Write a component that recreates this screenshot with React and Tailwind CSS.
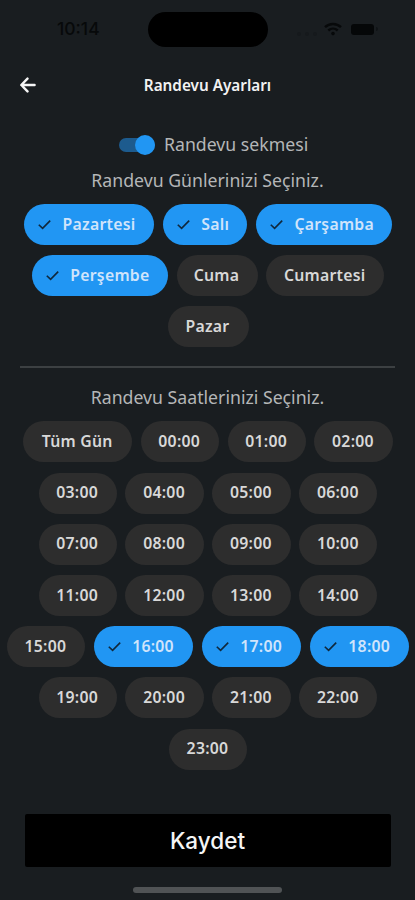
import { useState } from 'react'

const DAYS = [
  { label: 'Pazartesi', width: 'w-[130px]', selected: true },
  { label: 'Salı', width: 'w-[84.5px]', selected: true },
  { label: 'Çarşamba', width: 'w-[136px]', selected: true },
  { label: 'Perşembe', width: 'w-[136px]', selected: true },
  { label: 'Cuma', width: 'w-[81px]' },
  { label: 'Cumartesi', width: 'w-[118px]' },
  { label: 'Pazar', width: 'w-[81px]' },
]

const SELECTED_HOURS = [16, 17, 18]

const HOURS = [
  { label: 'Tüm Gün', width: 'w-[108.5px]' },
  ...Array.from({ length: 24 }, (_, i) => {
    const selected = SELECTED_HOURS.includes(i)
    return {
      label: `${String(i).padStart(2, '0')}:00`,
      width: selected ? 'w-[99.4px]' : 'w-[78.2px]',
      selected,
    }
  }),
]

const StatusBar = () => (
  <div className="flex h-[58px] items-center text-[#07090a]">
    <div className="w-[148px] pl-[57px] font-['Inter',sans-serif] text-[17.5px] font-medium leading-none">10:14</div>
    <div className="h-[35px] w-[120px] rounded-full bg-black" />
    <div className="ml-[29px] flex w-[20px] justify-between pt-[9px]">
      <span className="h-1 w-1 rounded-full bg-[#16191c]" />
      <span className="h-1 w-1 rounded-full bg-[#16191c]" />
      <span className="h-1 w-1 rounded-full bg-[#16191c]" />
    </div>
    <svg className="ml-[7px] h-[14px] w-[18px]" viewBox="0 0 18 14" fill="none" stroke="currentColor" strokeWidth="2.4">
      <path d="M1 5.2C5.5.9 12.5.9 17 5.2" />
      <path d="M4.3 8.5c2.7-2.5 6.7-2.5 9.4 0" />
      <circle cx="9" cy="11.6" r="1.8" fill="currentColor" stroke="none" />
    </svg>
    <div className="ml-[9px] h-[11px] w-[23px] rounded-[3px] bg-[#050708]" />
    <div className="ml-[2px] h-1 w-[2px] rounded-r bg-[#101416]" />
  </div>
)

const Chip = ({ label, width, selected, onClick }) => (
  <button
    type="button"
    onClick={onClick}
    className={`flex h-[41px] shrink-0 items-center rounded-full whitespace-nowrap text-[15.8px] font-semibold tracking-[0.25px] ${width} ${
      selected ? 'bg-[#2196f3] pl-[14px] text-[#d0e4fb]' : 'justify-center bg-[#2d2d2d] pr-px text-[#d8d8d8]'
    }`}
  >
    {selected &&
      <svg className="mr-[11.5px] h-[13px] w-[13px] shrink-0" viewBox="0 0 13 13" fill="none" stroke="#10283c" strokeWidth="1.6">
        <path d="M.8 6.7l3.8 3.7 7.6-7.8" />
      </svg>
    }
    <span>{label}</span>
  </button>
)

const ChipGroup = ({ items }) => {
  const [chips, setChips] = useState(items)

  const toggle = (index) => {
    setChips(chips.map((chip, i) => i === index ? { ...chip, selected: !chip.selected, width: 'px-[17px]' } : chip))
  }

  return (
    <div className="flex flex-wrap justify-center gap-x-[8.7px] gap-y-[10.2px] pl-px">
      {chips.map((chip, i) => <Chip key={chip.label} {...chip} onClick={() => toggle(i)} />)}
    </div>
  )
}

const App = () => {
  return (
    <div className="flex h-[900px] w-[415px] flex-col overflow-hidden bg-[#191d20] font-['Noto_Sans','Open_Sans',sans-serif]">
      <StatusBar />

      <header className="flex h-[54px] items-center pl-[20px]">
        <svg className="h-[16px] w-[16px]" viewBox="0 0 16 16" fill="none" stroke="#f5f5f5" strokeWidth="2.4" strokeLinecap="round" strokeLinejoin="round">
          <path d="M14.6 8H1.5M7.5 1.6L1.3 8l6.2 6.4" />
        </svg>
        <h1 className="mr-[36px] flex-1 pt-px text-center text-[15.3px] font-semibold leading-none text-[#f2f2f2]">Randevu Ayarları</h1>
      </header>

      <main className="flex-1">
        <div className="mt-[20px] flex h-[25px] items-center pl-[119px]">
          <div className="flex h-[14px] w-[36px] items-center justify-end rounded-full bg-[#1d5b8e]">
            <span className="h-[20px] w-[20px] shrink-0 rounded-full bg-[#2196f3]" />
          </div>
          <span className="ml-[9px] text-[17.7px] leading-none text-[#b4b6b7]">Randevu sekmesi</span>
        </div>

        <h2 className="mt-[11px] h-[36px] text-center text-[17.7px] leading-[24px] text-[#b4b6b7]">Randevu Günlerinizi Seçiniz.</h2>
        <ChipGroup items={DAYS} />

        <hr className="mx-[20px] mt-[19px] border-t-2 border-[#3c4042]" />

        <h2 className="mt-[17px] h-[36px] text-center text-[17.7px] leading-[24px] text-[#b4b6b7]">Randevu Saatlerinizi Seçiniz.</h2>
        <ChipGroup items={HOURS} />
      </main>

      <footer className="flex flex-col items-center pb-[7px]">
        <button type="button" className="h-[53px] w-[366px] rounded-[2px] bg-black pt-[2px] font-['Inter',sans-serif] text-[22.5px] font-medium leading-none text-[#f5f5f5]">
          Kaydet
        </button>
        <div className="mt-[20px] h-[6px] w-[149px] rounded-full bg-[#505355]" />
      </footer>
    </div>
  )
}

export default App
